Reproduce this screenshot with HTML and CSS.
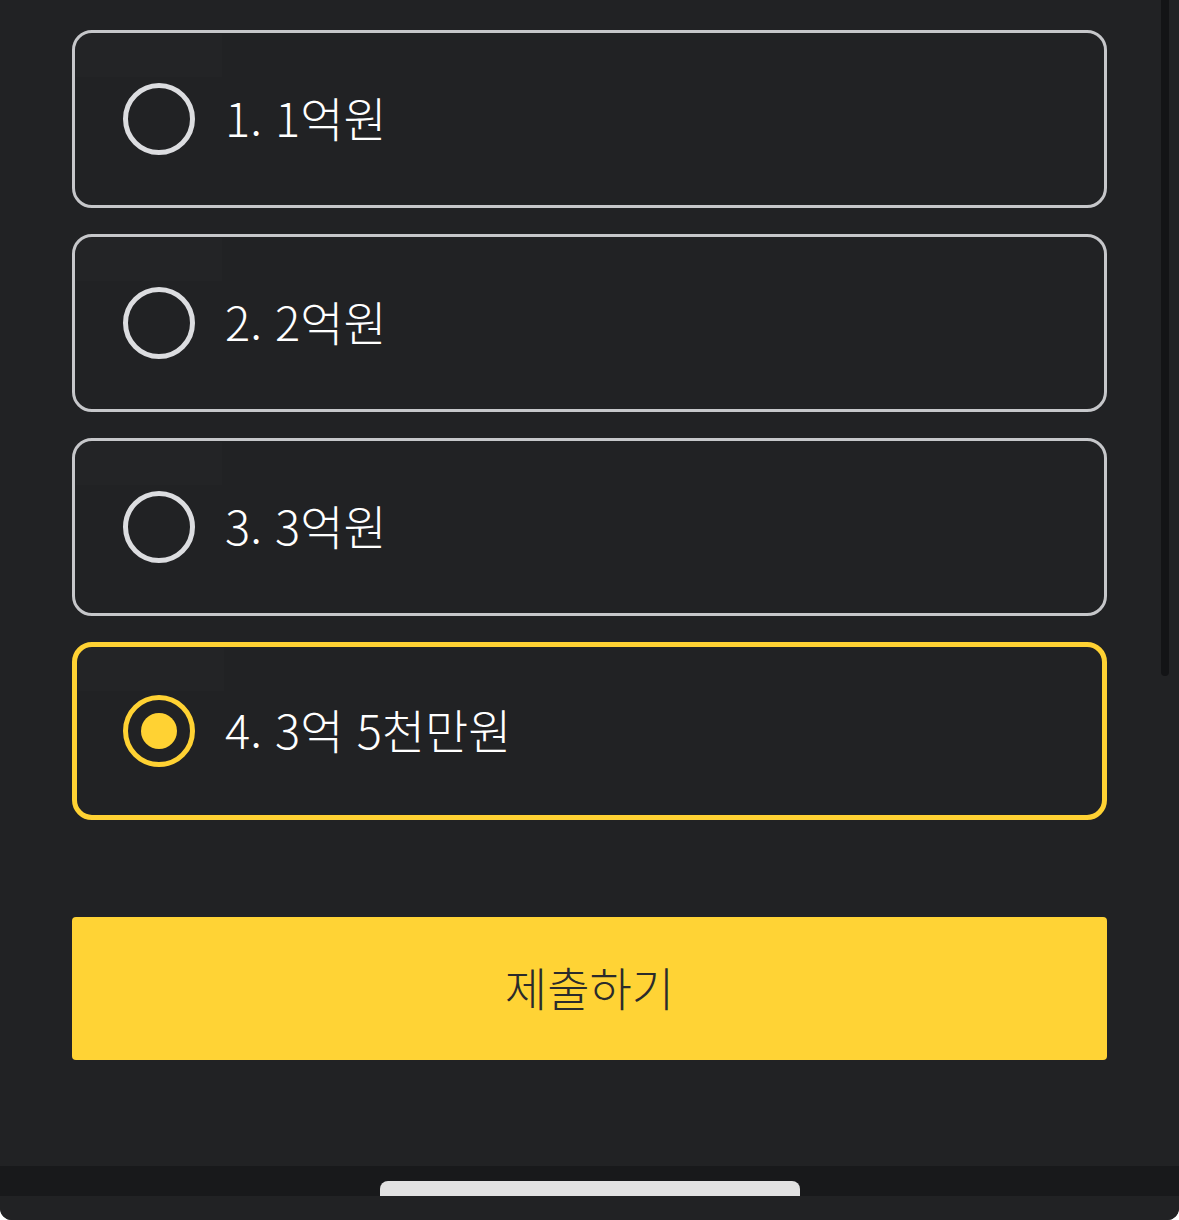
FILE: index.html
```html
<!DOCTYPE html>
<html lang="ko">
<head>
<meta charset="utf-8">
<link rel="stylesheet" href="styles.css">
</head>
<body>
<div class="screen">
  <div class="scrollbar"></div>
  <main class="content">
    <ul class="options">
      <li class="option"><span class="radio"></span><span class="label">1. 1억원</span></li>
      <li class="option"><span class="radio"></span><span class="label">2. 2억원</span></li>
      <li class="option"><span class="radio"></span><span class="label">3. 3억원</span></li>
      <li class="option selected"><span class="radio"></span><span class="label">4. 3억 5천만원</span></li>
    </ul>
    <button class="submit">제출하기</button>
  </main>
  <div class="navbar"><div class="home-pill"></div></div>
  <div class="bottom"></div>
</div>
</body>
</html>
```

FILE: styles.css
```css
html, body {
  margin: 0;
  padding: 0;
  background: #ffffff;
}
.screen {
  position: relative;
  width: 1179px;
  height: 1220px;
  background: #212224;
  border-radius: 0 0 12px 12px;
  overflow: hidden;
  display: flex;
  flex-direction: column;
  font-family: "Noto Sans CJK KR", "Noto Sans", sans-serif;
}
.scrollbar {
  position: absolute;
  left: 1161px;
  top: 0;
  width: 8px;
  height: 676px;
  background: #131416;
  border-radius: 0 0 4px 4px;
}
.content {
  flex: 1;
  padding: 30px 72px 0 72px;
  display: flex;
  flex-direction: column;
}
.options {
  list-style: none;
  margin: 0;
  padding: 0;
  display: flex;
  flex-direction: column;
  gap: 26px;
}
.option {
  position: relative;
  box-sizing: border-box;
  height: 178px;
  border: 3px solid #c6c7ca;
  border-radius: 20px;
  display: flex;
  align-items: center;
  gap: 30px;
  padding-left: 48px;
}
.option::before {
  content: "";
  position: absolute;
  left: 1px;
  top: 1px;
  width: 146px;
  height: 43px;
  background: rgba(255, 255, 255, 0.012);
}
.option.selected {
  border: 5px solid #ffd233;
  padding-left: 46px;
}
.radio {
  box-sizing: border-box;
  width: 72px;
  height: 72px;
  border-radius: 50%;
  border: 5px solid #dcdde0;
  display: flex;
  align-items: center;
  justify-content: center;
  flex: none;
}
.selected .radio {
  border-color: #ffd233;
}
.selected .radio::after {
  content: "";
  width: 36px;
  height: 36px;
  border-radius: 50%;
  background: #ffd233;
}
.label {
  color: #ffffff;
  font-size: 47px;
  font-weight: 300;
  line-height: 1;
  margin-top: -6px;
}
.submit {
  margin-top: 97px;
  height: 143px;
  border: none;
  border-radius: 4px;
  background: #ffd335;
  color: #2b2b2b;
  font-family: inherit;
  font-size: 46px;
  font-weight: 300;
  padding: 0 0 6px 0;
}
.navbar {
  height: 30px;
  background: #18191b;
  display: flex;
  justify-content: center;
  align-items: flex-end;
  overflow: hidden;
}
.home-pill {
  width: 420px;
  height: 15px;
  background: #e2e2e2;
  border-radius: 8px 8px 0 0;
}
.bottom {
  height: 24px;
  background: #212224;
}
```
